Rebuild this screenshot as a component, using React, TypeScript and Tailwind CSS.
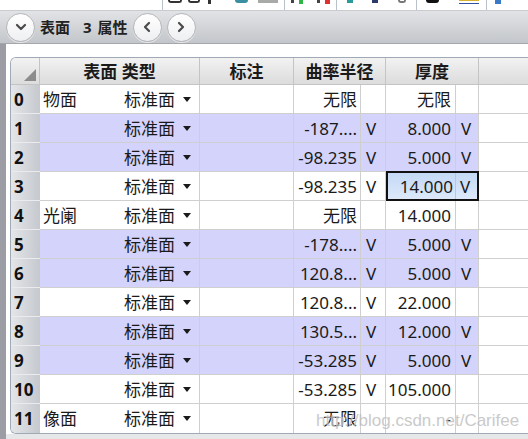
import React from "react";

type Row = {
  n: string;
  name?: string;
  r: string;
  rv?: boolean;
  t: string;
  tv?: boolean;
  purple?: boolean;
  sel?: boolean;
};

const rows: Row[] = [
  { n: "0", name: "物面", r: "无限", t: "无限" },
  { n: "1", r: "-187....", rv: true, t: "8.000", tv: true, purple: true },
  { n: "2", r: "-98.235", rv: true, t: "5.000", tv: true, purple: true },
  { n: "3", r: "-98.235", rv: true, t: "14.000", tv: true, sel: true },
  { n: "4", name: "光阑", r: "无限", t: "14.000" },
  { n: "5", r: "-178....", rv: true, t: "5.000", tv: true, purple: true },
  { n: "6", r: "120.8...", rv: true, t: "5.000", tv: true, purple: true },
  { n: "7", r: "120.8...", rv: true, t: "22.000" },
  { n: "8", r: "130.5...", rv: true, t: "12.000", tv: true, purple: true },
  { n: "9", r: "-53.285", rv: true, t: "5.000", tv: true, purple: true },
  { n: "10", r: "-53.285", rv: true, t: "105.000" },
  { n: "11", name: "像面", r: "无限", t: "-" },
];

function Chevron({ dir }: { dir: "down" | "left" | "right" }) {
  const d =
    dir === "down"
      ? "M3 5 L7 9 L11 5"
      : dir === "left"
      ? "M9 3 L5 7 L9 11"
      : "M5 3 L9 7 L5 11";
  return (
    <svg width="14" height="14" viewBox="0 0 14 14">
      <path d={d} fill="none" stroke="#4a4a4a" strokeWidth="2.2" strokeLinecap="round" strokeLinejoin="round" />
    </svg>
  );
}

function CircleBtn({ dir }: { dir: "down" | "left" | "right" }) {
  return (
    <div className="w-[29px] h-[29px] rounded-full border border-[#b4b6ba] bg-gradient-to-b from-white to-[#eeeff1] flex items-center justify-center shadow-[0_1px_0_rgba(255,255,255,0.6)]">
      <Chevron dir={dir} />
    </div>
  );
}

function Sep() {
  return <div className="w-px h-[10px] bg-[#b8c0cc]" />;
}

export default function App() {
  const font = {
    fontFamily: '"Noto Sans", "Noto Sans CJK SC", sans-serif',
  };
  return (
    <div
      className="relative w-[528px] h-[439px] overflow-hidden bg-white text-[#1a1a1a] flex flex-col"
      style={font}
    >
      {/* top toolbar remnant */}
      <div className="h-[10px] bg-white flex items-start shrink-0">
        <div className="w-[162px]" />
        <Sep />
        <div className="ml-[5px] w-[14px] h-[3px] rounded-b-full border-b-2 border-x-2 border-[#333]" />
        <div className="ml-[6px] w-[12px] h-[3px] rounded-b-full border-b-2 border-x-2 border-[#333]" />
        <div className="ml-[8px] w-[3px] h-[4px] bg-[#333]" />
        <div className="ml-[24px] w-[13px] h-[3px] rounded-b-full bg-[#3a8fa0]" />
        <div className="ml-[10px] w-[20px] h-[3px] bg-[#a8aaa8]" />
        <div className="ml-[6px]" />
        <Sep />
        <div className="ml-[6px] w-[3px] h-[3px] bg-[#444]" />
        <div className="ml-[5px] w-[4px] h-[4px] bg-[#2fb544]" />
        <div className="ml-[14px] w-[3px] h-[3px] bg-[#444]" />
        <div className="ml-[5px] w-[5px] h-[4px] bg-[#e03030]" />
        <div className="ml-[6px]" />
        <Sep />
        <div className="ml-[10px] w-[6px] h-[3px] bg-[#2a9a9a]" />
        <div className="ml-[19px] w-[6px] h-[3px] bg-[#2c3a6a]" />
        <div className="ml-[20px] w-[8px] h-[3px] rounded-b-full border-b-2 border-x-2 border-[#777]" />
        <div className="ml-[10px]" />
        <Sep />
        <div className="ml-[9px] w-[13px] h-[3px] rounded-b-full bg-[#111]" />
        <div className="ml-[20px] w-[20px] h-[4px] flex flex-col justify-between">
          <div className="h-px bg-[#d8b030]" />
          <div className="h-px bg-[#3050a0]" />
        </div>
        <div className="ml-[7px]" />
        <Sep />
        <div className="ml-[8px] w-[6px] h-[4px] bg-[#3a78c8]" />
      </div>

      {/* gray bar */}
      <div className="h-[34px] shrink-0 border-t border-[#cacbce] border-b border-b-[#a4a7ab] bg-gradient-to-b from-[#e2e3e6] to-[#c3c6ca] flex items-center pl-[6px]">
        <CircleBtn dir="down" />
        <div className="ml-[5px] flex items-center text-[15px] font-bold text-[#222] leading-none">
          <span>表面</span>
          <span className="ml-[13px]">3</span>
          <span className="ml-[6px]">属性</span>
        </div>
        <div className="ml-[5px]">
          <CircleBtn dir="left" />
        </div>
        <div className="ml-[5px]">
          <CircleBtn dir="right" />
        </div>
      </div>

      {/* body */}
      <div className="flex-1 flex min-h-0">
        <div className="w-[6px] bg-[#9c9ca5] shrink-0" />
        <div className="flex-1 flex flex-col bg-[#e6e7e9] min-w-0">
          <div className="bg-white flex-1 flex flex-col pl-[4px] pt-[13px]">
            <div className="border-t border-l border-b border-[#9eaab6] rounded-tl-[6px] rounded-bl-[6px] overflow-hidden w-[530px]">
              {/* header */}
              <div className="flex h-[27px] border-b border-[#c4c4c4] bg-gradient-to-b from-[#f2f2f2] to-[#dcdcdc] text-[17px] font-bold leading-none">
                <div className="w-[29px] shrink-0 border-r border-[#c4c4c4] relative flex items-end justify-end pr-[3px] pb-[3px]">
                  <svg width="12" height="12" viewBox="0 0 12 12">
                    <polygon points="12,0 12,12 0,12" fill="#8c8c8c" />
                  </svg>
                </div>
                <div className="w-[160px] shrink-0 border-r border-[#c4c4c4] flex items-center justify-center">表面 类型</div>
                <div className="w-[94px] shrink-0 border-r border-[#c4c4c4] flex items-center justify-center">标注</div>
                <div className="w-[92px] shrink-0 border-r border-[#c4c4c4] flex items-center justify-center">曲率半径</div>
                <div className="w-[93px] shrink-0 border-r border-[#c4c4c4] flex items-center justify-center">厚度</div>
                <div className="flex-1" />
              </div>
              {rows.map((row, i) => {
                const bg = row.purple ? "bg-[#d3d3fb]" : "bg-white";
                const last = i === rows.length - 1;
                return (
                  <div
                    key={row.n}
                    className={`flex h-[29px] text-[17px] leading-none ${last ? "" : "border-b border-[#cfcfcf]"}`}
                  >
                    <div className={`w-[29px] shrink-0 bg-gradient-to-r from-[#e4e6e9] to-[#c5c8cd] flex items-center pl-[3px] font-bold text-[#111] ${last ? "" : "-mb-px border-b border-[#e9ebee]"}`}>
                      {row.n}
                    </div>
                    <div className={`w-[160px] shrink-0 border-r border-[#cfcfcf] ${bg} flex items-center pl-[3px]`}>
                      <span className="w-[81px]">{row.name ?? ""}</span>
                      <span>标准面</span>
                      <svg className="ml-[8px]" width="8" height="5" viewBox="0 0 8 5">
                        <polygon points="0,0 8,0 4,5" fill="#1a1a1a" />
                      </svg>
                    </div>
                    <div className={`w-[94px] shrink-0 border-r border-[#cfcfcf] ${bg}`} />
                    <div className={`w-[67px] shrink-0 border-r border-[#cfcfcf] ${bg} flex items-center justify-end pr-[3px] whitespace-nowrap`}>
                      {row.r}
                    </div>
                    <div className={`w-[25px] shrink-0 border-r border-[#cfcfcf] ${bg} flex items-center pl-[5px]`}>
                      {row.rv ? "V" : ""}
                    </div>
                    {row.sel ? (
                      <div className="w-[93px] shrink-0 -mt-px h-[30px] border-2 border-[#111] bg-gradient-to-b from-[#c4d9f5] to-[#dde9fa] flex items-center">
                        <div className="w-[68px] flex justify-end pr-[2px] border-r border-[#b8c8dc] h-full items-center">{row.t}</div>
                        <div className="pl-[4px]">V</div>
                      </div>
                    ) : (
                      <>
                        <div className={`w-[70px] shrink-0 border-r border-[#cfcfcf] ${bg} flex items-center justify-end pr-[4px] whitespace-nowrap`}>
                          {row.t}
                        </div>
                        <div className={`w-[23px] shrink-0 border-r border-[#cfcfcf] ${bg} flex items-center pl-[5px]`}>
                          {row.tv ? "V" : ""}
                        </div>
                      </>
                    )}
                    <div className="flex-1 bg-white" />
                  </div>
                );
              })}
            </div>
          </div>
          <div className="h-[6px] bg-[#e6e7e9] shrink-0" />
        </div>
      </div>

      {/* watermark */}
      <div
        className="absolute left-[316px] top-[408px] text-[17px] text-[#bdbdbd] opacity-80 pointer-events-none whitespace-nowrap"
        style={{ fontFamily: '"Liberation Sans", Arial, sans-serif', textShadow: "0 0 1px #fff" }}
      >
        http://blog.csdn.net/Carifee
      </div>
    </div>
  );
}
